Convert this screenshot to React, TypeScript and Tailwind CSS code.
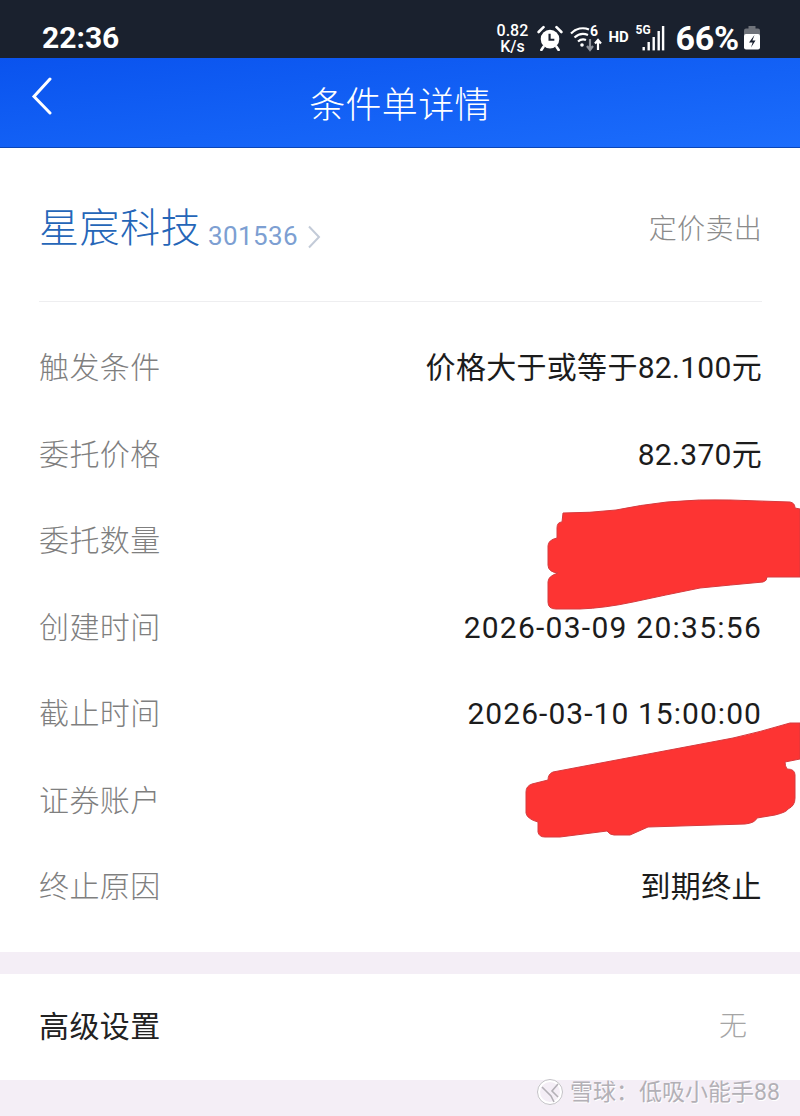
import React from 'react';

const rows = [
  { label: '触发条件', value: '价格大于或等于82.100元', spacing: 'tracking-[0.3px]' },
  { label: '委托价格', value: '82.370元', spacing: 'tracking-[0.3px]' },
  { label: '委托数量', value: '', spacing: '' },
  { label: '创建时间', value: '2026-03-09 20:35:56', spacing: 'tracking-[1.25px]' },
  { label: '截止时间', value: '2026-03-10 15:00:00', spacing: 'tracking-[1.05px]' },
  { label: '证券账户', value: '', spacing: '' },
  { label: '终止原因', value: '到期终止', spacing: 'tracking-[0.4px]' },
];

const cjk = "font-['Roboto','Noto_Sans_CJK_SC',sans-serif]";

const StatusIcons = () => (
  <div className="flex items-center text-white">
    <div className="flex flex-col items-center w-[34px] text-[16px] leading-[16px] font-medium pt-[2px] mr-[8px] font-['Roboto',sans-serif]">
      <span>0.82</span>
      <span>K/s</span>
    </div>
    {/* alarm */}
    <svg width="26" height="26" viewBox="0 0 24 24" className="mr-[7px]">
      <circle cx="12" cy="13" r="8.6" fill="white" />
      <path d="M11.6 8v5.6h4.4" fill="none" stroke="#1a2130" strokeWidth="2" />
      <path d="M1.5 6.5 6 2M22.5 6.5 18 2" stroke="white" strokeWidth="2.4" strokeLinecap="round" />
      <path d="M6 20l-2 3M18 20l2 3" stroke="white" strokeWidth="2.4" strokeLinecap="round" />
    </svg>
    {/* wifi + arrows */}
    <svg width="33" height="30" viewBox="0 0 33 30" className="mr-[5px]">
      <path d="M1 10.5C6 5.5 13 4 19 6.5" fill="none" stroke="white" strokeWidth="2.2" />
      <path d="M4.5 14.5C8.5 10.8 13.5 10 18 12" fill="none" stroke="white" strokeWidth="2.2" />
      <path d="M8 18.5C10.5 16.3 13.5 16 16 17" fill="none" stroke="white" strokeWidth="2.2" />
      <circle cx="12" cy="22" r="1.8" fill="white" />
      <text x="20" y="13" fontSize="14" fontWeight="700" fill="white" fontFamily="Roboto, sans-serif">6</text>
      <path d="M20 16v11M17 23l3 4 3-4" fill="none" stroke="#8f939b" strokeWidth="2.2" />
      <path d="M28 27V17M25 20.5l3-3.5 3 3.5" fill="none" stroke="white" strokeWidth="2.2" />
    </svg>
    <span className="text-[15px] font-bold w-[24px] mr-[3px] font-['Roboto',sans-serif]">HD</span>
    {/* 5G signal */}
    <svg width="30" height="30" viewBox="0 0 29 30" className="mr-[10px]">
      <text x="0" y="11" fontSize="12" fontWeight="700" fill="white" fontFamily="Roboto, sans-serif">5G</text>
      <rect x="7" y="24" width="2.4" height="3.4" fill="white" />
      <rect x="12" y="19" width="2.4" height="8.4" fill="white" />
      <rect x="17" y="14" width="2.4" height="13.4" fill="white" />
      <rect x="22" y="8" width="2.4" height="19.4" fill="white" />
      <rect x="26.4" y="3" width="2.4" height="24.4" fill="white" />
    </svg>
    <span className="text-[34px] leading-none font-bold mr-[5px] tracking-[-0.2px] font-['Roboto',sans-serif]">66%</span>
    {/* battery */}
    <svg width="16" height="24" viewBox="0 0 16 24">
      <rect x="4.5" y="0" width="7" height="3" fill="#6f737a" />
      <rect x="0" y="2.5" width="16" height="8" rx="2" fill="#6f737a" />
      <rect x="0" y="8" width="16" height="15.5" rx="2" fill="white" />
      <path d="M10.5 9 5 16.5h3.6L7 21.5l4.5-7H8.4z" fill="#1a2130" />
    </svg>
  </div>
);

export default function App() {
  return (
    <div className={`relative w-[800px] h-[1116px] overflow-hidden bg-[#f4eef6] ${cjk}`}>
      <div className="h-[58px] bg-[#1a212e] flex items-center justify-between pl-[42px] pr-[40px] pt-[19px] pb-[2px]">
        <span className="text-[30px] leading-none font-bold text-white font-['Roboto',sans-serif]">22:36</span>
        <StatusIcons />
      </div>

      <div className="h-[90px] bg-gradient-to-br from-[#0a53ee] to-[#1c6dfc] border-b border-[#0b46b8] grid grid-cols-[1fr_auto_1fr] items-center">
        <div className="pl-[31px] pb-[13px]">
          <svg width="22" height="38" viewBox="0 0 22 38" fill="none" stroke="white" strokeWidth="3" strokeLinecap="round">
            <path d="M19 2 3 19.5 19 36" />
          </svg>
        </div>
        <h1 className="text-[36px] leading-none font-light text-white pt-[7px] tracking-[0.3px]">条件单详情</h1>
        <div />
      </div>

      <div className="bg-white h-[804px] pl-[39px] pr-[38px]">
        <div className="h-[154px] border-b border-[#eeeef0] flex items-center justify-between pt-[8px]">
          <div className="flex items-center">
            <span className="text-[40px] leading-none font-light text-[#2566b8] tracking-[0.5px]">星宸科技</span>
            <span className="text-[26px] leading-none text-[#7d9fd2] ml-[7px] mt-[15px] tracking-[0.4px]">301536</span>
            <svg width="14" height="24" viewBox="0 0 14 24" fill="none" stroke="#c3cbd8" strokeWidth="2" className="ml-[9px] mt-[16px]">
              <path d="M2 1.5 12 12 2 22.5" />
            </svg>
          </div>
          <span className="text-[28px] leading-none font-light text-[#8b8b8b] mt-[2px] tracking-[0.3px]">定价卖出</span>
        </div>
        <div className="pt-[22px]">
          {rows.map((row) => (
            <div key={row.label} className="h-[86.5px] flex items-center justify-between pt-[2px]">
              <span className="text-[30px] leading-none font-light text-[#7f7f7f] tracking-[0.4px]">{row.label}</span>
              <span className={`text-[30px] leading-none font-normal text-[#1c1c1c] ${row.spacing}`}>{row.value}</span>
            </div>
          ))}
        </div>
      </div>

      <div className="mt-[22px] h-[106px] bg-white pl-[39px] pr-[40px] flex items-center justify-between">
        <span className="text-[30px] leading-none text-[#222222] tracking-[0.4px]">高级设置</span>
        <span className="text-[28px] leading-none font-light text-[#a5a5a5] mr-[13px]">无</span>
      </div>

      {/* redaction scribbles */}
      <svg className="absolute left-0 top-0 pointer-events-none" width="800" height="1116" viewBox="0 0 800 1116">
        <path
          d="M563 513Q590 513 616 510Q640 505 667 502Q700 499 730 500L790 502Q795 503 795 508L800 509V577H767Q767 581 763 582Q730 585 700 588Q665 595 633 602Q605 608 580 609H556Q548 609 548 602V582Q548 576 558 573Q548 572 548 565V546Q548 540 557 538V528Q557 522 562 522Z"
          fill="#fd3433"
          stroke="#d63a3e"
          strokeWidth="1"
          strokeLinejoin="round"
        />
        <path
          d="M800 723H790Q760 732 733 738L553 772Q548 774 548 780L532 784Q526 786 526 792V813Q527 819 538 822V832Q539 837 545 837H560L607 831Q610 835 614 835H630L648 827L745 824Q755 823 757 818L775 815Q787 812 788 809Q795 806 795 798V775Q795 769 787 769Q785 766 785 762L800 759Z"
          fill="#fd3433"
          stroke="#d63a3e"
          strokeWidth="1"
          strokeLinejoin="round"
        />
      </svg>

      {/* watermark */}
      <div className="absolute left-[537px] top-[1079px] flex items-center text-[#b3b0b6] [text-shadow:1px_1px_0_#ffffff]">
        <svg width="26" height="26" viewBox="0 0 26 26" fill="none" className="mr-[7px]">
          <circle cx="13" cy="13" r="11.5" stroke="#ffffff" strokeWidth="3" />
          <circle cx="13" cy="13" r="12.5" stroke="#b3b0b6" strokeWidth="0.8" />
          <path d="M5 8l9 9 3 6M21 5l-6 7 6 6" stroke="#b3b0b6" strokeWidth="1.6" />
        </svg>
        <span className="text-[23px] leading-none whitespace-nowrap">雪球：低吸小能手88</span>
      </div>
    </div>
  );
}
